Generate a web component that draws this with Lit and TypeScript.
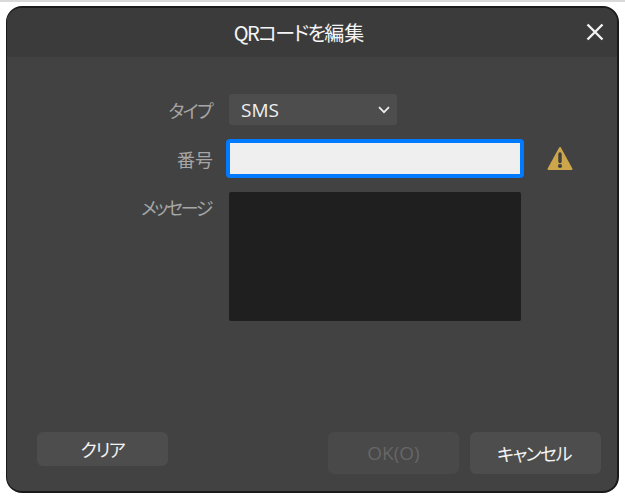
import { LitElement, html, css } from "lit";
import { customElement } from "lit/decorators.js";

@customElement("app-root")
export class AppRoot extends LitElement {
  static styles = css`
    :host {
      display: block;
      width: 625px;
      height: 501px;
      background: #fff;
      overflow: hidden;
      font-family: "Noto Sans CJK JP", "Open Sans", sans-serif;
      font-feature-settings: "palt";
    }
    .strip { height: 2px; background: #d9d9d9; }
    .dialog {
      box-sizing: border-box;
      margin: 4px 0 0 6px;
      width: 613px;
      height: 487px;
      border: 2px solid #1a1a1a;
      border-width: 2px 2px 2px 1px;
      border-radius: 16px;
      background: #424242;
      display: flex;
      flex-direction: column;
      overflow: hidden;
    }
    .header {
      flex: none;
      height: 49px;
      box-sizing: border-box;
      padding-right: 26px;
      background: #3b3b3b;
      display: flex;
      align-items: center;
      justify-content: center;
      position: relative;
      color: #f5f5f5;
      font-size: 20px;
    }
    .tight { letter-spacing: -1.7px; }
    .close { position: absolute; right: 13px; top: 15px; width: 18px; height: 18px; display: block; }
    .body {
      flex: 1;
      display: grid;
      grid-template-columns: 206px 292px 1fr;
      grid-template-rows: 31px 33px 129px;
      row-gap: 17px;
      column-gap: 16px;
      padding-top: 37px;
      align-content: start;
    }
    .label {
      color: #a6a6a6;
      font-size: 18px;
      line-height: 30px;
      text-align: right;
      align-self: center;
    }
    .kana3 { letter-spacing: -1.6px; padding-right: 1px; }
    .kana5 { letter-spacing: -2.4px; padding-right: 2px; }
    .top { align-self: start; }
    .select {
      width: 168px;
      box-sizing: border-box;
      background: #4d4d4d;
      border-radius: 3px;
      color: #f0f0f0;
      font-size: 19px;
      font-family: "Open Sans", sans-serif;
      font-weight: 500;
      padding: 0 7px 0 12px;
      display: flex;
      align-items: center;
      justify-content: space-between;
    }
    .chev { width: 12px; height: 8px; display: block; }
    .input {
      box-sizing: border-box;
      width: 298px;
      height: 39px;
      margin: -3px;
      background: #efefef;
      border: 4px solid #007aff;
      border-radius: 4px;
    }
    .warn { width: 26px; height: 25px; display: block; margin: 4px 0 0 10px; }
    .text { background: #1f1f1f; border-radius: 2px; }
    .footer {
      flex: none;
      height: 59px;
      padding: 0 16px 0 30px;
      display: flex;
      align-items: flex-start;
      gap: 11px;
    }
    .btn {
      box-sizing: border-box;
      width: 131px;
      height: 42px;
      border-radius: 6px;
      background: #4d4d4d;
      color: #f2f2f2;
      font-size: 18px;
      display: flex;
      align-items: center;
      justify-content: center;
    }
    .clear { height: 34px; margin-right: auto; letter-spacing: -1.3px; }
    .cancel { letter-spacing: -1.6px; padding-right: 3px; }
    .ok { background: #494949; color: #666666; font-family: "Open Sans", sans-serif; font-size: 19px; }
  `;

  render() {
    return html`
      <div class="strip"></div>
      <div class="dialog">
        <div class="header">
          <span><span class="tight">QRコードを</span>編集</span>
          <svg class="close" viewBox="0 0 18 18"><path d="M1.5 1.5 16.5 16.5M16.5 1.5 1.5 16.5" stroke="#f2f2f2" stroke-width="2.4" fill="none"/></svg>
        </div>
        <div class="body">
          <div class="label kana3">タイプ</div>
          <div class="select">SMS
            <svg class="chev" viewBox="0 0 12 8"><path d="M1 1.2 6 6.2 11 1.2" stroke="#eee" stroke-width="1.7" fill="none"/></svg>
          </div>
          <div></div>
          <div class="label">番号</div>
          <div class="input"></div>
          <svg class="warn" viewBox="0 0 26 25">
            <path d="M13 2 24.5 23H1.5Z" fill="#cda64c" stroke="#cda64c" stroke-width="2" stroke-linejoin="round"/>
            <path d="M13 8V15.5" stroke="#3f3f3f" stroke-width="3.4" stroke-linecap="round"/>
            <circle cx="13" cy="20" r="2.1" fill="#3f3f3f"/>
          </svg>
          <div class="label top kana5">メッセージ</div>
          <div class="text"></div>
          <div></div>
        </div>
        <div class="footer">
          <div class="btn clear">クリア</div>
          <div class="btn ok">OK(O)</div>
          <div class="btn cancel">キャンセル</div>
        </div>
      </div>
    `;
  }
}
